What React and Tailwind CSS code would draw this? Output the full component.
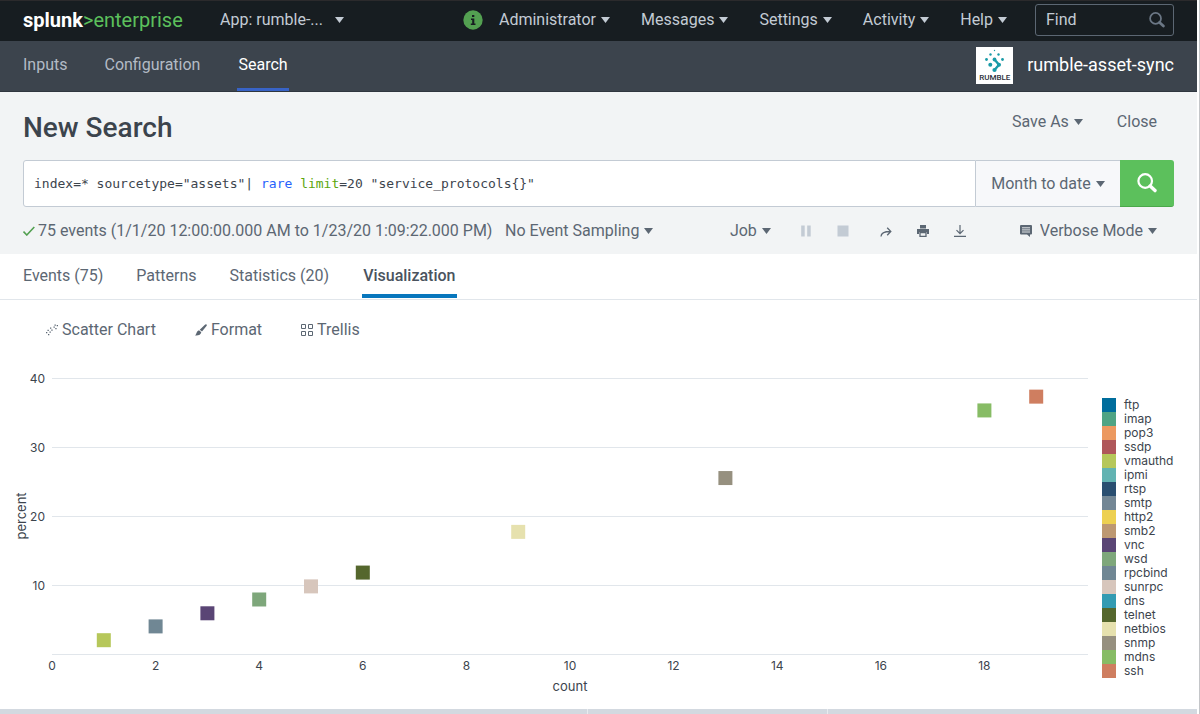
import { useState } from 'react';

const menus = ['Administrator', 'Messages', 'Settings', 'Activity', 'Help'];

const navItems = ['Inputs', 'Configuration', 'Search'];

const tabs = ['Events (75)', 'Patterns', 'Statistics (20)', 'Visualization'];

const series = [
  { name: 'ftp', color: '#006d9c' },
  { name: 'imap', color: '#4fa484' },
  { name: 'pop3', color: '#ec9960' },
  { name: 'ssdp', color: '#af575a' },
  { name: 'vmauthd', color: '#b6c75a', count: 1, percent: 2 },
  { name: 'ipmi', color: '#62b3b2' },
  { name: 'rtsp', color: '#294e70' },
  { name: 'smtp', color: '#738795' },
  { name: 'http2', color: '#edd051' },
  { name: 'smb2', color: '#bd9872' },
  { name: 'vnc', color: '#5a4575', count: 3, percent: 5.9 },
  { name: 'wsd', color: '#7ea77b', count: 4, percent: 7.9 },
  { name: 'rpcbind', color: '#708794', count: 2, percent: 4 },
  { name: 'sunrpc', color: '#d7c6bc', count: 5, percent: 9.8 },
  { name: 'dns', color: '#339bb2' },
  { name: 'telnet', color: '#55672d', count: 6, percent: 11.8 },
  { name: 'netbios', color: '#e6e1ae', count: 9, percent: 17.7 },
  { name: 'snmp', color: '#96907f', count: 13, percent: 25.5 },
  { name: 'mdns', color: '#87bc65', count: 18, percent: 35.3 },
  { name: 'ssh', color: '#cf7e60', count: 19, percent: 37.3 },
];

const X_MAX = 20;
const Y_MAX = 40;
const PLOT_HEIGHT = 276;

function Caret({ className = '' }) {
  return (
    <svg viewBox="0 0 9 6" className={`h-[6px] w-[9px] shrink-0 ${className}`} fill="currentColor" aria-hidden="true">
      <path d="M0 0H9L4.5 6Z" />
    </svg>
  );
}

function MagnifierIcon({ className }) {
  return (
    <svg viewBox="0 0 20 20" className={className} fill="none" stroke="currentColor" aria-hidden="true">
      <circle cx="8.2" cy="8" r="6.8" strokeWidth="2.2" />
      <path d="M13.2 13L18 17.6" strokeWidth="3.4" strokeLinecap="round" />
    </svg>
  );
}

function RumbleLogo() {
  return (
    <div className="flex h-[37px] w-[37px] flex-col items-center bg-white">
      <svg viewBox="0 0 37 27" className="h-[27px] w-[37px]" fill="#1a9ba8" aria-hidden="true">
        <circle cx="18.5" cy="3.5" r="0.7" />
        <circle cx="14.5" cy="7.5" r="1.2" />
        <circle cx="22.5" cy="7.5" r="1.2" />
        <circle cx="10.5" cy="12.5" r="1.4" />
        <circle cx="26.5" cy="12.5" r="1.4" />
        <circle cx="18.5" cy="12.5" r="1.9" />
        <circle cx="14.3" cy="17.7" r="2" />
        <circle cx="23" cy="17.7" r="2" />
        <circle cx="18.5" cy="23" r="2.1" />
        <path d="M18.5 12.5L23 17.7L18.5 23" fill="none" stroke="#1a9ba8" strokeWidth="2.4" />
      </svg>
      <span className="text-[8px] leading-[8px] font-medium text-[#2b2f3a]">RUMBLE</span>
    </div>
  );
}

function TopBar() {
  return (
    <header className="flex h-[41px] items-center border-t border-[#2b2a2c] bg-[#171d21] px-[23px] pb-0.5 text-[#c3cbd4]">
      <a href="#home" className="flex w-[197px] items-baseline text-xl leading-6 whitespace-nowrap">
        <span className="font-bold text-white">splunk</span>
        <span className="text-[#5cc05c]">&gt;enterprise</span>
      </a>
      <button type="button" className="flex items-center gap-3">
        App: rumble-... <Caret />
      </button>
      <div className="ml-auto flex items-center">
        <svg viewBox="0 0 20 20" className="mr-4 h-5 w-5" aria-hidden="true">
          <circle cx="10" cy="10" r="9.7" fill="#53a051" />
          <path d="M9 5h2.3v2H9zM8 8.6h3.3v5h1.2v1.4H7.8v-1.4H9.2v-3.6H8z" fill="#171d21" />
        </svg>
        <nav className="flex gap-[31px]">
          {menus.map((menu) => (
            <button key={menu} type="button" className="flex items-center gap-[5px]">
              {menu} <Caret />
            </button>
          ))}
        </nav>
        <label className="ml-7 flex h-8 w-[139px] items-center rounded-[3px] border border-[#5c6773] px-2">
          <input
            type="text"
            placeholder="Find"
            aria-label="Find"
            className="w-full min-w-0 bg-transparent pl-0.5 outline-none placeholder:text-[#c3cbd4]"
          />
          <MagnifierIcon className="h-4 w-4 shrink-0 text-[#6b7785]" />
        </label>
      </div>
    </header>
  );
}

function AppNav() {
  return (
    <div className="flex h-[51px] items-center justify-between border-b border-[#2f363f] bg-[#3c444d] px-[23px]">
      <nav className="flex h-full gap-9">
        {navItems.map((item) => (
          <a
            key={item}
            href={`#${item.toLowerCase()}`}
            className={
              item === 'Search'
                ? 'flex items-center border-b-[3px] border-[#3863c6] px-px text-white'
                : 'flex items-center border-b-[3px] border-transparent pr-px text-[#b3bbc5]'
            }
          >
            {item}
          </a>
        ))}
      </nav>
      <div className="flex items-center gap-[14px] pb-0.5">
        <RumbleLogo />
        <span className="text-lg text-white">rumble-asset-sync</span>
      </div>
    </div>
  );
}

function InlineSelect({ label, options }) {
  return (
    <label className="relative flex items-center">
      <select aria-label={label} className="field-sizing-content cursor-pointer appearance-none bg-transparent pr-[14px] outline-none">
        {options.map((option) => (
          <option key={option}>{option}</option>
        ))}
      </select>
      <Caret className="pointer-events-none absolute right-0" />
    </label>
  );
}

function SearchBar() {
  const [query, setQuery] = useState('index=* sourcetype="assets"| rare limit=20 "service_protocols{}"');

  return (
    <form className="mt-[14px] flex h-[47px]" onSubmit={(e) => e.preventDefault()}>
      <div className="relative flex-1 rounded-l-[3px] border border-[#c3cbd4] bg-white font-['DejaVu_Sans_Mono','Liberation_Mono',monospace] text-[13px] leading-5">
        <input
          type="text"
          value={query}
          onChange={(e) => setQuery(e.target.value)}
          aria-label="Search query"
          spellCheck={false}
          className="h-full w-full px-[10px] text-transparent caret-gray-800 outline-none"
        />
        {/* Highlighted copy of the query, drawn over the input */}
        <div aria-hidden="true" className="pointer-events-none absolute inset-0 flex items-center px-[10px] whitespace-pre text-[#3c444d]">
          {query.split(/(\brare\b|\blimit\b)/).map((token, index) => (
            <span key={index} className={token === 'rare' ? 'text-[#2662fc]' : token === 'limit' ? 'text-[#5ba60b]' : ''}>
              {token}
            </span>
          ))}
        </div>
      </div>
      <div className="flex w-[144px] items-center justify-center border-y border-[#c3cbd4] bg-[#f7f8fa]">
        <InlineSelect label="Time range" options={['Month to date', 'Last 24 hours', 'All time']} />
      </div>
      <button type="submit" aria-label="Search" className="flex w-[54px] items-center justify-center rounded-r-[3px] border-b border-[#4aa84a] bg-[#5cc05c] text-white">
        <MagnifierIcon className="h-5 w-5" />
      </button>
    </form>
  );
}

function JobControls() {
  return (
    <div className="flex items-center gap-[17px]">
      <button type="button" className="mr-2 flex items-center gap-[5px]">
        Job <Caret />
      </button>
      <button type="button" aria-label="Pause" className="flex w-5 justify-center text-[#c3cbd4]">
        <svg viewBox="0 0 12 12" className="h-3 w-3" fill="currentColor">
          <path d="M1.2 0.5h3.5v11H1.2zM7.2 0.5h3.5v11H7.2z" />
        </svg>
      </button>
      <button type="button" aria-label="Stop" className="mr-1.5 flex w-5 justify-center text-[#c3cbd4]">
        <svg viewBox="0 0 12 12" className="h-3 w-3" fill="currentColor">
          <path d="M0.5 0.5h11v11h-11z" />
        </svg>
      </button>
      <button type="button" aria-label="Share" className="flex w-5 justify-center">
        <svg viewBox="0 0 12 12" className="h-3 w-3" fill="none" stroke="currentColor" strokeWidth="1.3">
          <path d="M1 11.5C1 8 3.5 6.5 10.5 6.5M7.2 2.8l3.6 3.7L7.2 10.2" />
        </svg>
      </button>
      <button type="button" aria-label="Print" className="flex w-5 justify-center">
        <svg viewBox="0 0 12 12" className="h-3 w-3" fill="currentColor">
          <path d="M3 0h6v3.5H3zM0 4h12v5h-2V7H2v2H0z" />
          <path d="M3 7.5h6v3.8H3z" fill="none" stroke="currentColor" strokeWidth="1.3" />
        </svg>
      </button>
      <button type="button" aria-label="Export" className="flex w-5 justify-center">
        <svg viewBox="0 0 12 12" className="h-3 w-3" fill="none" stroke="currentColor" strokeWidth="1.2">
          <path d="M6 0v8.5M2.5 5.2L6 8.7l3.5-3.5M0 11.3h12" />
        </svg>
      </button>
    </div>
  );
}

function SearchHeader() {
  return (
    <section className="h-[162px] bg-[#f2f4f5] px-[23px] pt-[18px] text-[#5c6773]">
      <div className="flex items-start justify-between">
        <h1 className="text-[28px] leading-9 font-medium text-[#3c444d]">New Search</h1>
        <div className="flex items-center gap-[34px] pr-[17px]">
          <button type="button" className="flex items-center gap-[5px]">
            Save As <Caret />
          </button>
          <button type="button">Close</button>
        </div>
      </div>
      <SearchBar />
      <div className="mt-3 flex items-center pr-[17px]">
        <div className="flex w-[482px] items-center gap-[3px] whitespace-nowrap">
          <svg viewBox="0 0 12 10" className="h-[10px] w-3" fill="none" stroke="#53a051" strokeWidth="1.6" aria-hidden="true">
            <path d="M0.5 5.5L3.8 9L11.3 1" />
          </svg>
          75 events (1/1/20 12:00:00.000 AM to 1/23/20 1:09:22.000 PM)
        </div>
        <InlineSelect label="Event sampling" options={['No Event Sampling', '1 : 10', '1 : 100']} />
        <div className="ml-auto flex items-center gap-[50px]">
          <JobControls />
          <div className="flex items-center gap-2">
            <svg viewBox="0 0 12 12" className="h-3 w-3" fill="currentColor" aria-hidden="true">
              <path d="M1 0h10a1 1 0 0 1 1 1v7.5a1 1 0 0 1-1 1h-1V12L7 9.5H1a1 1 0 0 1-1-1V1a1 1 0 0 1 1-1z" />
              <path d="M2 2.8h8M2 4.9h8M2 7h8" stroke="#f2f4f5" strokeWidth="0.9" />
            </svg>
            <InlineSelect label="Search mode" options={['Verbose Mode', 'Fast Mode', 'Smart Mode']} />
          </div>
        </div>
      </div>
    </section>
  );
}

function ResultTabs() {
  const [active, setActive] = useState('Visualization');

  return (
    <div role="tablist" className="flex h-[46px] gap-[33px] border-b border-[#e1e6eb] px-[23px] text-[#5c6773]">
      {tabs.map((tab) => (
        <button
          key={tab}
          type="button"
          role="tab"
          aria-selected={tab === active}
          onClick={() => setActive(tab)}
          className={
            tab === active
              ? 'mb-px border-b-4 border-[#0877bd] px-px pt-1 font-medium text-[#4a535e]'
              : 'mb-px border-b-4 border-transparent pt-1'
          }
        >
          {tab}
        </button>
      ))}
    </div>
  );
}

function ChartToolbar() {
  return (
    <div className="flex h-[60px] items-center gap-[39px] px-[46px] text-[#5c6773]">
      <button type="button" className="flex items-center gap-1">
        <svg viewBox="0 0 12 12" className="h-3 w-3" fill="currentColor" aria-hidden="true">
          <path d="M0 8h1.3v1.3H0zM2 10h1.3v1.3H2zM1.5 5.8h1.3v1.3H1.5zM3.5 7.5h1.3v1.3H3.5zM4 3.5h1.3v1.3H4zM5.3 5.5h1.3v1.3H5.3zM7.5 2.5h1.3v1.3H7.5zM8.5 0.5h1.3v1.3H8.5zM10.7 1h1.3v1.3H10.7zM9.3 4h1.3v1.3H9.3z" />
        </svg>
        Scatter Chart
      </button>
      <button type="button" className="flex items-center gap-1">
        <svg viewBox="0 0 12 12" className="h-3 w-3" fill="currentColor" aria-hidden="true">
          <path d="M11.3 0.3C11.9 0.7 12 1.2 11.7 1.7L7 7.6L4.7 5.7L10.2 0.5zM4 6.3L6.3 8.2C6 10.5 3.5 11.8 0 11.4C1.8 10.5 1.2 7 4 6.3z" />
        </svg>
        Format
      </button>
      <button type="button" className="flex items-center gap-1">
        <svg viewBox="0 0 12 12" className="h-3 w-3" fill="none" stroke="currentColor" aria-hidden="true">
          <path d="M0.5 0.5h4v4h-4zM7.5 0.5h4v4h-4zM0.5 7.5h4v4h-4zM7.5 7.5h4v4h-4z" />
        </svg>
        Trellis
      </button>
    </div>
  );
}

function ScatterChart() {
  const x = (count) => `${(count / X_MAX) * 100}%`;
  const y = (percent) => PLOT_HEIGHT - (percent / Y_MAX) * PLOT_HEIGHT;
  const points = series.filter((s) => s.count);

  return (
    <div className="flex pt-[18px] pr-[17px] pl-[52px] font-['Inter','Liberation_Sans',sans-serif] text-[13px] text-[#3c444d]">
      <svg className="h-[331px] min-w-0 flex-1 overflow-visible" role="img" aria-label="percent by count">
        {[40, 30, 20, 10].map((tick) => (
          <g key={tick}>
            <line x1="0" x2="100%" y1={y(tick)} y2={y(tick)} stroke="#e1e6eb" shapeRendering="crispEdges" />
            <text x="-7" y={y(tick) + 5} textAnchor="end" fontSize="12" fill="currentColor">
              {tick}
            </text>
          </g>
        ))}
        <line x1="0" x2="100%" y1={y(0)} y2={y(0)} stroke="#e1e6eb" shapeRendering="crispEdges" />
        {[0, 2, 4, 6, 8, 10, 12, 14, 16, 18].map((tick) => (
          <text key={tick} x={x(tick)} y={PLOT_HEIGHT + 16} textAnchor="middle" fontSize="12" fill="currentColor">
            {tick}
          </text>
        ))}
        <text x="50%" y={PLOT_HEIGHT + 37} textAnchor="middle" fill="currentColor">
          count
        </text>
        <text transform={`translate(-26 ${PLOT_HEIGHT / 2}) rotate(-90)`} textAnchor="middle" fill="currentColor">
          percent
        </text>
        {points.map((p) => (
          <svg key={p.name} x={x(p.count)} y={y(p.percent)} className="overflow-visible">
            <rect x="-7" y="-7" width="14" height="14" fill={p.color} />
          </svg>
        ))}
      </svg>
      <ul className="mt-5 ml-[14px] w-[78px] text-xs">
        {series.map((s) => (
          <li key={s.name} className="flex h-[14px] gap-2 leading-[14px]">
            <span className="h-[14px] w-[14px]" style={{ backgroundColor: s.color }} />
            {s.name}
          </li>
        ))}
      </ul>
    </div>
  );
}

export default function App() {
  return (
    <div className="flex min-h-screen flex-col border-r border-[#c4c6c9] bg-white pr-0.5 font-['Roboto','Liberation_Sans',sans-serif] text-base leading-6">
      <TopBar />
      <AppNav />
      <SearchHeader />
      <ResultTabs />
      <ChartToolbar />
      <ScatterChart />
      <div className="mt-auto flex h-[5px] gap-px bg-[#e8ebef]">
        <div className="w-[49%] bg-[#d3d9e0]" />
        <div className="w-[20%] bg-[#d3d9e0]" />
        <div className="flex-1 bg-[#d3d9e0]" />
      </div>
    </div>
  );
}
